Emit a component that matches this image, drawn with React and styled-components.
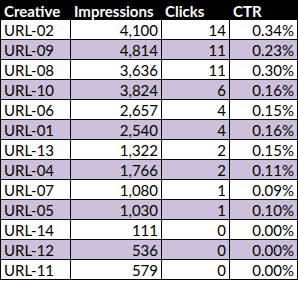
import React from "react";
import styled, { createGlobalStyle } from "styled-components";

const Global = createGlobalStyle`
  html, body { margin: 0; padding: 0; background: #ffffff; }
  body { font-family: Lato, "Open Sans", sans-serif; }
`;

const Grid = styled.div`
  display: grid;
  grid-template-columns: 69px 90px 67px 67px;
  grid-auto-rows: 19px;
  gap: 1px;
  background: #000000;
  padding: 0 1px 1px 1px;
  width: 298px;
  box-sizing: border-box;
`;

const HeadCell = styled.div`
  height: 21px;
  background: #000000;
  color: #ffffff;
  font-weight: 700;
  font-size: 15px;
  display: flex;
  align-items: center;
  padding-left: ${(p) => p.$pl || 3}px;
  box-sizing: border-box;
  white-space: nowrap;
`;

const Cell = styled.div`
  background: ${(p) => (p.$shade ? "#ccc0da" : "#ffffff")};
  color: #000000;
  font-size: 15px;
  display: flex;
  align-items: center;
  justify-content: ${(p) => (p.$num ? "flex-end" : "flex-start")};
  padding: 0 3px;
  box-sizing: border-box;
  white-space: nowrap;
`;

const rows = [
  ["URL-02", "4,100", "14", "0.34%"],
  ["URL-09", "4,814", "11", "0.23%"],
  ["URL-08", "3,636", "11", "0.30%"],
  ["URL-10", "3,824", "6", "0.16%"],
  ["URL-06", "2,657", "4", "0.15%"],
  ["URL-01", "2,540", "4", "0.16%"],
  ["URL-13", "1,322", "2", "0.15%"],
  ["URL-04", "1,766", "2", "0.11%"],
  ["URL-07", "1,080", "1", "0.09%"],
  ["URL-05", "1,030", "1", "0.10%"],
  ["URL-14", "111", "0", "0.00%"],
  ["URL-12", "536", "0", "0.00%"],
  ["URL-11", "579", "0", "0.00%"],
];

export default function App() {
  return (
    <>
      <Global />
      <Grid>
        <HeadCell $pl={3}>Creative</HeadCell>
        <HeadCell>Impressions</HeadCell>
        <HeadCell>Clicks</HeadCell>
        <HeadCell>CTR</HeadCell>
        {rows.map((r, i) => (
          <React.Fragment key={r[0]}>
            <Cell $shade={i % 2 === 1}>{r[0]}</Cell>
            <Cell $shade={i % 2 === 1} $num>{r[1]}</Cell>
            <Cell $shade={i % 2 === 1} $num>{r[2]}</Cell>
            <Cell $shade={i % 2 === 1} $num>{r[3]}</Cell>
          </React.Fragment>
        ))}
      </Grid>
    </>
  );
}
